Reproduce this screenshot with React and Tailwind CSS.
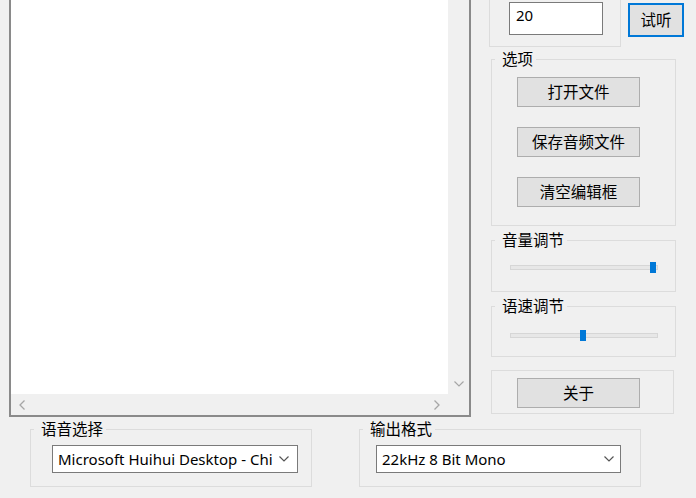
function Btn({ children, className = "" }) {
  return (
    <div
      className={
        "flex items-center justify-center w-[123px] h-[30px] bg-[#e1e1e1] border border-[#adadad] leading-[20px] text-[15.5px] " +
        className
      }
    >
      {children}
    </div>
  );
}

function Chevron({ className = "" }) {
  return (
    <svg width="10" height="6" viewBox="0 0 10 6" className={className}>
      <polyline points="0.5,0.5 5,5 9.5,0.5" fill="none" stroke="currentColor" strokeWidth="1.2" />
    </svg>
  );
}

function Legend({ children }) {
  return <legend className="ml-[3px] pl-[7px] pr-[3px] leading-[20px] text-[15.5px]">{children}</legend>;
}

function Slider({ left }) {
  return (
    <div className="relative w-[148px] h-[11px]">
      <div className="absolute left-0 right-0 top-[3px] h-[5px] bg-[#e7e7e7] border border-[#d6d6d6]" />
      <div className={"absolute top-0 w-[6px] h-[11px] bg-[#0078d7] " + left} />
    </div>
  );
}

export default function App() {
  return (
    <div className="w-[696px] h-[498px] overflow-hidden bg-[#f0f0f0] text-[15px] text-black font-['Noto_Sans','Noto_Sans_CJK_SC',sans-serif]">
      <div className="flex h-[417px]">
        {/* Edit box */}
        <div className="ml-[9px] w-[462px] h-[417px] border-x-2 border-b-2 border-[#8a8a8a] flex flex-col">
          <div className="flex flex-1">
            <div className="flex-1 bg-white" />
            <div className="w-[21px] flex flex-col justify-end">
              <div className="h-[21px] flex items-center justify-center text-[#a6a6a6]">
                <Chevron />
              </div>
            </div>
          </div>
          <div className="h-[21px] flex">
            <div className="flex-1 flex items-center justify-between px-[8px] text-[#a6a6a6]">
              <svg width="6" height="10" viewBox="0 0 6 10">
                <polyline points="5.5,0.5 1,5 5.5,9.5" fill="none" stroke="currentColor" strokeWidth="1.3" />
              </svg>
              <svg width="6" height="10" viewBox="0 0 6 10">
                <polyline points="0.5,0.5 5,5 0.5,9.5" fill="none" stroke="currentColor" strokeWidth="1.3" />
              </svg>
            </div>
            <div className="w-[21px]" />
          </div>
        </div>

        {/* Right column */}
        <div className="ml-[18px] w-[196px] flex flex-col">
          <div className="flex items-start">
            <div className="w-[132px] h-[47px] border-x border-b border-[#dcdcdc] pl-[19px] pt-[2px]">
              <div className="w-[94px] h-[33px] bg-white border border-[#7a7a7a] pl-[6px] pt-[2px] leading-[20px]">
                20
              </div>
            </div>
            <div className="ml-[7px] mt-[3px] w-[56px] h-[34px] border-2 border-[#0078d7] bg-[#e1e1e1] flex items-center justify-center leading-[20px] text-[15.5px]">
              试听
            </div>
          </div>

          <fieldset className="ml-[2px] mt-[2px] w-[185px] border border-[#dcdcdc]">
            <Legend>选项</Legend>
            <div className="flex flex-col gap-[20px] pl-[25px] pt-[8px] pb-[18px]">
              <Btn>打开文件</Btn>
              <Btn>保存音频文件</Btn>
              <Btn>清空编辑框</Btn>
            </div>
          </fieldset>

          <fieldset className="ml-[2px] mt-[4px] w-[185px] border border-[#dcdcdc]">
            <Legend>音量调节</Legend>
            <div className="pl-[18px] pt-[12px] pb-[18px]">
              <Slider left="left-[140px]" />
            </div>
          </fieldset>

          <fieldset className="ml-[2px] mt-[4px] w-[185px] border border-[#dcdcdc]">
            <Legend>语速调节</Legend>
            <div className="pl-[18px] pt-[14px] pb-[15px]">
              <Slider left="left-[70px]" />
            </div>
          </fieldset>

          <div className="ml-[2px] mt-[13px] w-[183px] border border-[#dcdcdc] pl-[25px] pt-[7px] pb-[5px]">
            <Btn>关于</Btn>
          </div>
        </div>
      </div>

      {/* Bottom row */}
      <div className="flex">
        <fieldset className="ml-[30px] mt-[2px] w-[282px] border border-[#dcdcdc]">
          <Legend>语音选择</Legend>
          <div className="pl-[21px] pt-[6px] pb-[13px]">
            <div className="w-[246px] h-[28px] bg-white border border-[#7a7a7a] flex items-center pl-[5px] pr-[8px] leading-[20px]">
              <span className="flex-1 overflow-hidden whitespace-nowrap">Microsoft Huihui Desktop - Chi</span>
              <Chevron className="text-[#555]" />
            </div>
          </div>
        </fieldset>
        <fieldset className="ml-[47px] mt-[2px] w-[282px] border border-[#dcdcdc]">
          <Legend>输出格式</Legend>
          <div className="pl-[16px] pt-[6px] pb-[13px]">
            <div className="w-[245px] h-[28px] bg-white border border-[#7a7a7a] flex items-center pl-[5px] pr-[6px] leading-[20px]">
              <span className="flex-1 overflow-hidden whitespace-nowrap">22kHz 8 Bit Mono</span>
              <Chevron className="text-[#555]" />
            </div>
          </div>
        </fieldset>
      </div>
    </div>
  );
}
